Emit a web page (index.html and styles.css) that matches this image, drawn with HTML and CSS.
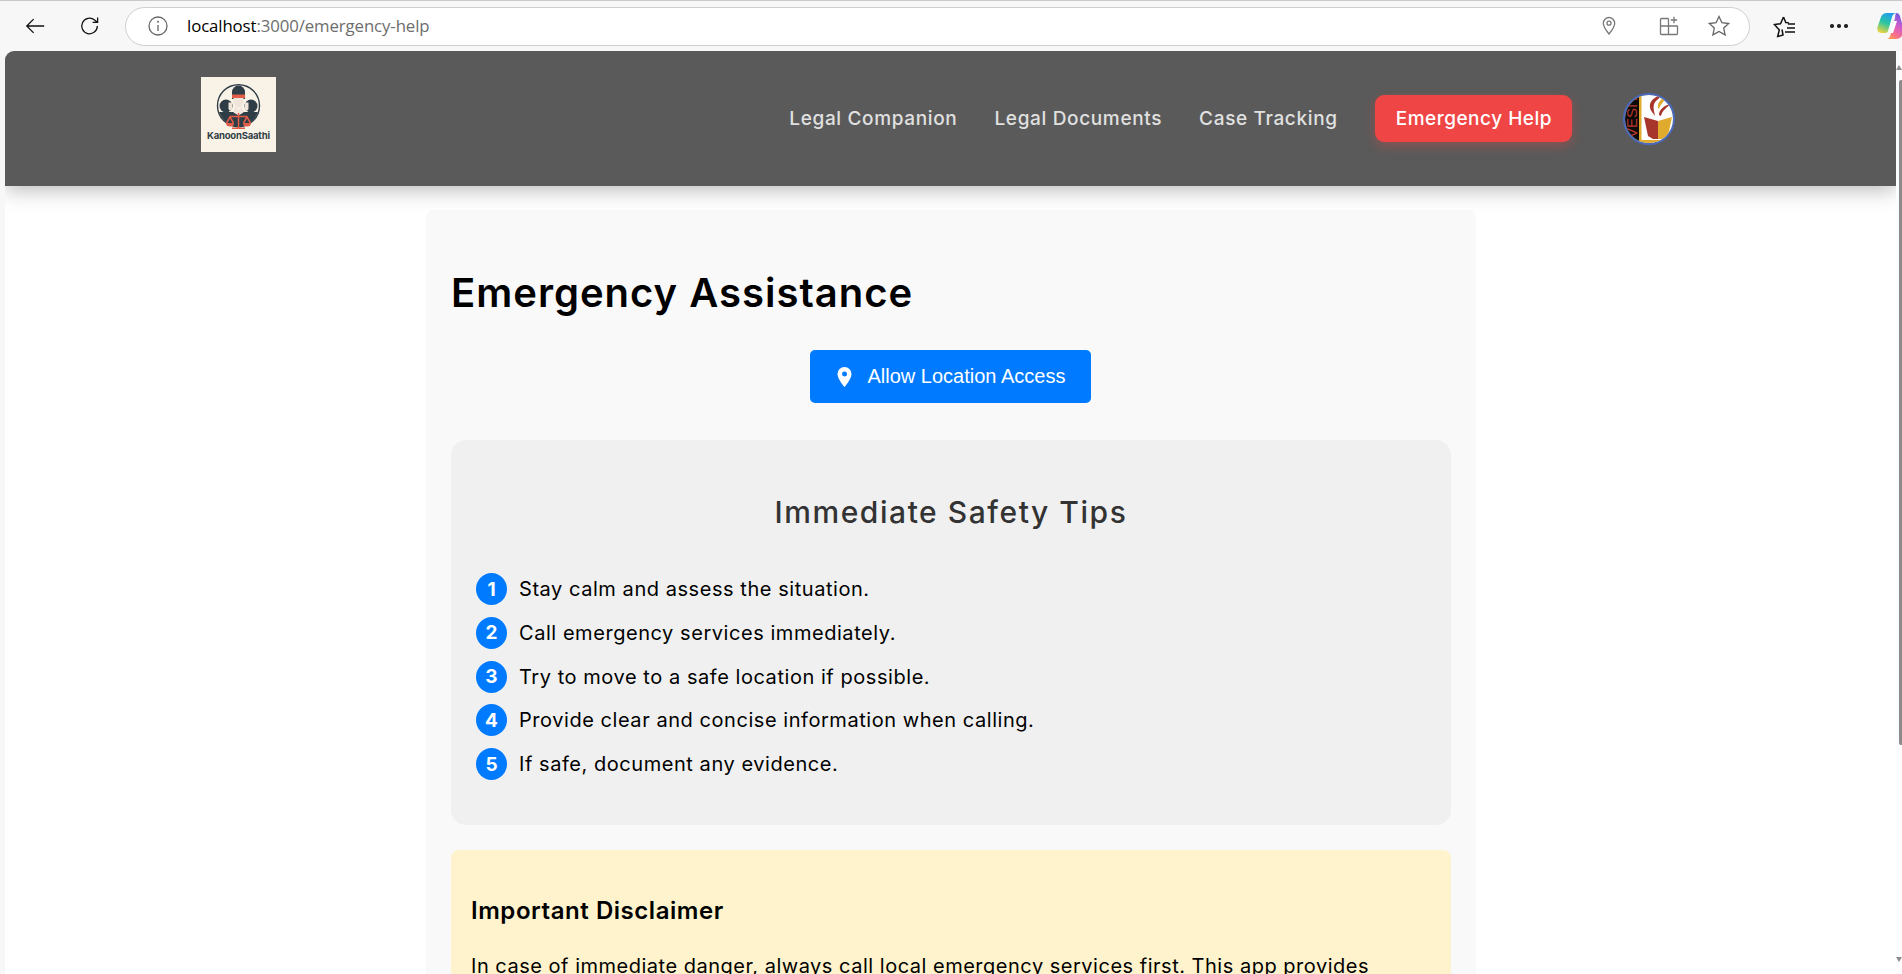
FILE: index.html
```html
<!DOCTYPE html>
<html lang="en">
<head>
<meta charset="utf-8">
<title>KanoonSaathi - Emergency Help</title>
<link rel="stylesheet" href="styles.css">
</head>
<body>
<div class="toolbar">
  <svg class="tb-icon back" viewBox="0 0 24 24"><path d="M22 12H3M10.500 4.500 3 12l7.500 7.500"/></svg>
  <svg class="tb-icon reload" viewBox="0 0 24 24"><path d="M20 12a8.500 8.500 0 1 1-3-6.500L20 8M20.300 2.600V8h-5.400"/></svg>
  <div class="address">
    <svg class="info" viewBox="0 0 20 20"><circle cx="10" cy="10" r="9"/><path d="M10 9v6"/><circle class="dot" cx="10" cy="5.800" r="1"/></svg>
    <span class="url"><span class="host">localhost</span>:3000/emergency-help</span>
    <svg class="addr-icon pin-o" viewBox="0 0 16 20"><path d="M8 1.500a5.700 5.700 0 0 0-5.700 5.700C2.300 11 8 18 8 18s5.700-7 5.700-10.800A5.700 5.700 0 0 0 8 1.500z"/><circle cx="8" cy="7.200" r="2"/></svg>
    <svg class="addr-icon apps" viewBox="0 0 20 20"><path d="M9.500 2.500H2.500a1 1 0 0 0-1 1V17.500a1 1 0 0 0 1 1H17.500a1 1 0 0 0 1-1V9.800M1.500 10h17M9.500 2.500v16M15 .8v6.400M11.800 4h6.400"/></svg>
    <svg class="addr-icon star" viewBox="0 0 24 24"><path d="M12 2.500l2.900 6.200 6.800.8-5 4.600 1.400 6.800L12 17.500l-6.100 3.400 1.400-6.800-5-4.600 6.800-.8z"/></svg>
  </div>
  <svg class="tb-icon fav" viewBox="0 0 24 24"><path d="M10.500 3l2.300 5.500 3 .3M9 15.500l1 5.500-5.300 1.500 1.600-6.500L1.500 10.500l6-.8L10.500 3M15 10h7M14 14h8M12 18h10"/></svg>
  <div class="dots"><i></i><i></i><i></i></div>
  <svg class="copilot" viewBox="0 0 28 26">
    <defs>
      <linearGradient id="cpA" x1=".6" y1="0" x2=".2" y2="1"><stop offset="0" stop-color="#1f9cf0"/><stop offset=".5" stop-color="#2bc6a0"/><stop offset="1" stop-color="#f4d43c"/></linearGradient>
      <linearGradient id="cpB" x1=".7" y1="0" x2=".3" y2="1"><stop offset="0" stop-color="#6b5be6"/><stop offset=".45" stop-color="#d45bc8"/><stop offset=".8" stop-color="#f8708a"/><stop offset="1" stop-color="#fb9a4c"/></linearGradient>
    </defs>
    <path fill="url(#cpB)" d="M19 0c3 0 4 2 4.500 5L26 14c1 5 0 12-7 12H9c3 0 4-2 4.500-4L18 5c0-3 1-5 1-5z"/>
    <path fill="url(#cpA)" d="M10 0H20c-3 0-4.500 2-5 4L11 18c-.5 1.500-2 2-3 2H4C1 20-.5 17 .5 14L4 4C5 1.500 7 0 10 0z"/>
    <path fill="#fff" d="M17 8h3l-4 12h-3z"/>
  </svg>
</div>

<div class="viewport">
  <div class="page">
    <header class="site-header">
      <svg class="logo" viewBox="0 0 75 75" role="img" aria-label="KanoonSaathi logo">
        <rect width="75" height="75" fill="#f9f2e7"/>
        <clipPath id="ring"><circle cx="37.500" cy="28.700" r="20.500"/></clipPath>
        <g clip-path="url(#ring)">
          <circle cx="25" cy="29" r="6.500" fill="#2f3e46"/>
          <circle cx="50" cy="29" r="6.500" fill="#2f3e46"/>
          <path fill="#2f3e46" d="M16 35h43v17H16z"/>
          <path fill="#efe5da" d="M27.500 25.500h3.500v6.500l-2 2-1.500-2zM47.500 25.500H44v6.500l2 2 1.500-2z"/>
          <path fill="#2f3e46" d="M31 22v-7a6.500 6.500 0 0 1 13 0v7z"/>
          <path fill="#efe5da" d="M32.500 21h10v5l-3 4.500h-4l-3-4.500z"/>
          <path fill="#e25d48" d="M31 17.500h13V21H31z"/>
          <path fill="#efe5da" d="M34 30l3.500 3 3.500-3 1.500 5.500-5 3-5-3z"/>
        </g>
        <circle cx="37.500" cy="28.700" r="21" fill="none" stroke="#2f3e46" stroke-width="1.400"/>
        <path fill="none" stroke="#e25d48" stroke-width="1.500" d="M37.500 36v15M28.500 39.500h18M29 40l-3.500 6M29 40l3.500 6M46 40l-3.500 6M46 40l3.500 6"/>
        <path fill="#e25d48" d="M25 46h8a4 3.500 0 0 1-8 0zM42 46h8a4 3.500 0 0 1-8 0zM31 50.500h13V52H31z"/>
        <text class="logo-text" x="37.500" y="61.500" text-anchor="middle" textLength="63">KanoonSaathi</text>
      </svg>
      <nav class="nav">
        <a class="nav-link">Legal Companion</a>
        <a class="nav-link">Legal Documents</a>
        <a class="nav-link">Case Tracking</a>
        <a class="nav-emergency">Emergency Help</a>
      </nav>
      <svg class="avatar" viewBox="0 0 48 48" role="img" aria-label="VESIT profile">
        <rect width="48" height="48" fill="#fff"/>
        <rect width="14" height="48" fill="#0d0a0a"/>
        <rect x="14" width="2.500" height="48" fill="#e0ab2d"/>
        <text class="avatar-text" transform="translate(12 43) rotate(-90)">VESIT</text>
        <rect x="16" y="45" width="32" height="3" fill="#e0ab2d"/>
        <path fill="#a8352b" d="M36 0C26 3 22 10 27 17l3 4c-1-6-3-11 1-15 2-2 5-4 5-6z"/>
        <path fill="#e0ab2d" d="M43 1c-7 2-11 7-10 12l1 1c1-4 5-8 9-13z"/>
        <path fill="#a8352b" d="M46 9c-6 1-12 5-12 11l2 1c1-5 5-8 10-12z"/>
        <path fill="#a8352b" d="M19 22l14 4v18h-5l-5-3z"/>
        <path fill="#e0ab2d" d="M33 26l14-4-4 19-5 3h-5z"/>
      </svg>
    </header>

    <main class="card">
      <h1 class="title">Emergency Assistance</h1>
      <div class="action-row">
        <button class="location-btn" type="button">
          <svg class="pin" viewBox="0 0 17 20"><path fill-rule="evenodd" d="M8.500 0A7 7 0 0 0 1.500 7c0 5 7 13 7 13s7-8 7-13a7 7 0 0 0-7-7zm0 4.500a2.500 2.500 0 1 1 0 5 2.500 2.500 0 0 1 0-5z"/></svg>
          Allow Location Access
        </button>
      </div>

      <section class="tips">
        <h2 class="tips-title">Immediate Safety Tips</h2>
        <ol class="tips-list">
          <li class="tip"><span class="num">1</span>Stay calm and assess the situation.</li>
          <li class="tip"><span class="num">2</span>Call emergency services immediately.</li>
          <li class="tip"><span class="num">3</span>Try to move to a safe location if possible.</li>
          <li class="tip"><span class="num">4</span>Provide clear and concise information when calling.</li>
          <li class="tip"><span class="num">5</span>If safe, document any evidence.</li>
        </ol>
      </section>

      <section class="disclaimer">
        <h3 class="disclaimer-title">Important Disclaimer</h3>
        <p class="disclaimer-text">In case of immediate danger, always call local emergency services first. This app provides</p>
      </section>
    </main>
  </div>
  <div class="scrollbar">
    <span class="arrow"></span>
    <span class="thumb"></span>
    <span class="arrow down"></span>
  </div>
</div>
</body>
</html>
```

FILE: styles.css
```css
* { box-sizing: border-box; }
html, body { margin: 0; height: 974px; overflow: hidden; }
body {
  display: flex;
  flex-direction: column;
  background: #f7f7f7;
  font-family: Inter, "Noto Sans", sans-serif;
  color: #000;
}

/* browser chrome */
.toolbar {
  flex: 0 0 51px;
  display: flex;
  align-items: center;
  background: #f7f7f7;
  border-top: 1px solid #c9c9c9;
  padding-left: 24px;
  position: relative;
  overflow: hidden;
}
.toolbar::before {
  content: "";
  position: absolute;
  left: 155px;
  top: -1px;
  width: 317px;
  height: 1px;
  background: #f7f7f7;
}
.tb-icon { fill: none; stroke: #111; stroke-width: 1.400; flex: none; }
.back { width: 22px; height: 22px; }
.reload { width: 22px; height: 22px; margin-left: 33px; }
.address {
  width: 1625px;
  height: 39px;
  margin-left: 24px;
  display: flex;
  align-items: center;
  background: #fff;
  border: 1.500px solid #cfcfcf;
  border-radius: 20px;
  padding-left: 22px;
  flex: none;
}
.info { width: 20px; height: 20px; fill: none; stroke: #666; stroke-width: 1.300; flex: none; }
.info .dot { fill: #666; stroke: none; }
.url {
  margin: 0 0 2px 19px;
  font-family: "Open Sans", sans-serif;
  font-size: 16.800px;
  letter-spacing: -.1px;
  color: #6d6d6d;
  white-space: nowrap;
}
.host { color: #000; }
.addr-icon { fill: none; stroke: #777; stroke-width: 1.300; flex: none; }
.pin-o { width: 16px; height: 20px; margin-left: 1172px; }
.apps { width: 20px; height: 20px; margin-left: 42px; }
.star { width: 24px; height: 24px; margin-left: 28px; stroke: #666; }
.fav { width: 24px; height: 24px; margin-left: 23px; stroke-width: 1.500; flex: none; }
.dots { display: flex; gap: 3.500px; margin-left: 33px; flex: none; }
.dots i { width: 3.500px; height: 3.500px; border-radius: 50%; background: #222; }
.copilot { width: 28px; height: 26px; margin-left: 29px; flex: none; }

/* viewport */
.viewport { flex: 1; display: flex; min-height: 0; }
.page {
  flex: 1;
  margin-left: 5px;
  background: #fff;
  border-top-left-radius: 9px;
  overflow: hidden;
}
.scrollbar {
  flex: 0 0 6px;
  display: flex;
  flex-direction: column;
  align-items: flex-end;
  background: #fdfdfd;
  padding: 14px 0 12px;
}
.arrow {
  width: 0; height: 0;
  border-left: 3px solid transparent;
  border-right: 3px solid transparent;
  border-bottom: 5px solid #8d8d8d;
}
.arrow.down { transform: rotate(180deg); margin-top: auto; }
.thumb { width: 3px; height: 665px; margin-top: 10px; background: #8b8b8b; border-radius: 2px 0 0 2px; }

/* site header */
.site-header {
  height: 135px;
  display: flex;
  align-items: center;
  background: #5a5a5a;
  padding: 0 221px 0 196px;
  box-shadow: 0 4px 20px rgba(0, 0, 0, .28);
  position: relative;
}
.logo { width: 75px; height: 75px; margin-bottom: 8px; flex: none; }
.logo-text { font-family: Inter, sans-serif; font-size: 9.500px; font-weight: 700; fill: #2f3e46; }
.nav { margin-left: auto; display: flex; align-items: center; gap: 37px; }
.nav-link {
  font-size: 19px;
  letter-spacing: .65px;
  font-weight: 500;
  color: #e0e0e0;
  white-space: nowrap;
}
.nav-emergency {
  display: block;
  height: 47px;
  line-height: 47px;
  padding: 0 20px 0 21px;
  font-size: 19px;
  letter-spacing: .5px;
  font-weight: 500;
  color: #fff;
  background: #f04545;
  border-radius: 9px;
  box-shadow: 0 4px 12px rgba(240, 69, 69, .35);
  white-space: nowrap;
}
.avatar {
  width: 52px;
  height: 52px;
  margin-left: 51px;
  border: 2px solid #4a69bd;
  border-radius: 50%;
  flex: none;
}
.avatar-text { font-family: "Liberation Sans", sans-serif; font-size: 15px; fill: #b5382c; }

/* content */
.card {
  width: 1050px;
  margin: 24px 0 0 421px;
  padding: 25px 25px 30px;
  background: #f9f9f9;
  border-radius: 8px;
}
.title {
  margin: 28px 0 27px;
  font-size: 40px;
  line-height: 60px;
  letter-spacing: 1px;
  font-weight: 600;
}
.action-row { display: flex; justify-content: center; margin-bottom: 37px; padding-right: 2px; }
.location-btn {
  display: flex;
  align-items: center;
  gap: 15px;
  width: 281px;
  height: 53px;
  padding: 0 0 0 26px;
  border: 0;
  border-radius: 5px;
  background: #007bff;
  color: #fff;
  font-family: "Liberation Sans", sans-serif;
  font-size: 20px;
}
.pin { width: 17px; height: 20px; fill: #fff; flex: none; }

.tips {
  height: 385px;
  padding: 50px 25px 0;
  background: #f0f0f0;
  border-radius: 15px;
}
.tips-title {
  margin: 0 0 39px;
  text-align: center;
  font-size: 30px;
  line-height: 44px;
  font-weight: 500;
  letter-spacing: 1.550px;
  color: #333;
}
.tips-list { list-style: none; margin: 0; padding: 0; display: grid; row-gap: 11.750px; }
.tip {
  display: flex;
  align-items: center;
  gap: 12px;
  height: 32px;
  font-size: 20px;
  letter-spacing: .55px;
}
.num {
  width: 31px;
  height: 32px;
  flex: none;
  display: flex;
  align-items: center;
  justify-content: center;
  border-radius: 50%;
  background: #007bff;
  color: #fff;
  font-size: 19px;
  font-weight: 700;
  letter-spacing: 0;
}

.disclaimer {
  margin-top: 25px;
  height: 200px;
  padding: 43px 20px 0;
  background: #fff3cd;
  border-radius: 8px;
}
.disclaimer-title { margin: 0 0 19px; font-size: 24px; line-height: 36px; font-weight: 600; letter-spacing: .55px; }
.disclaimer-text { margin: 0; font-size: 20px; line-height: 36px; letter-spacing: .51px; white-space: nowrap; }
```
